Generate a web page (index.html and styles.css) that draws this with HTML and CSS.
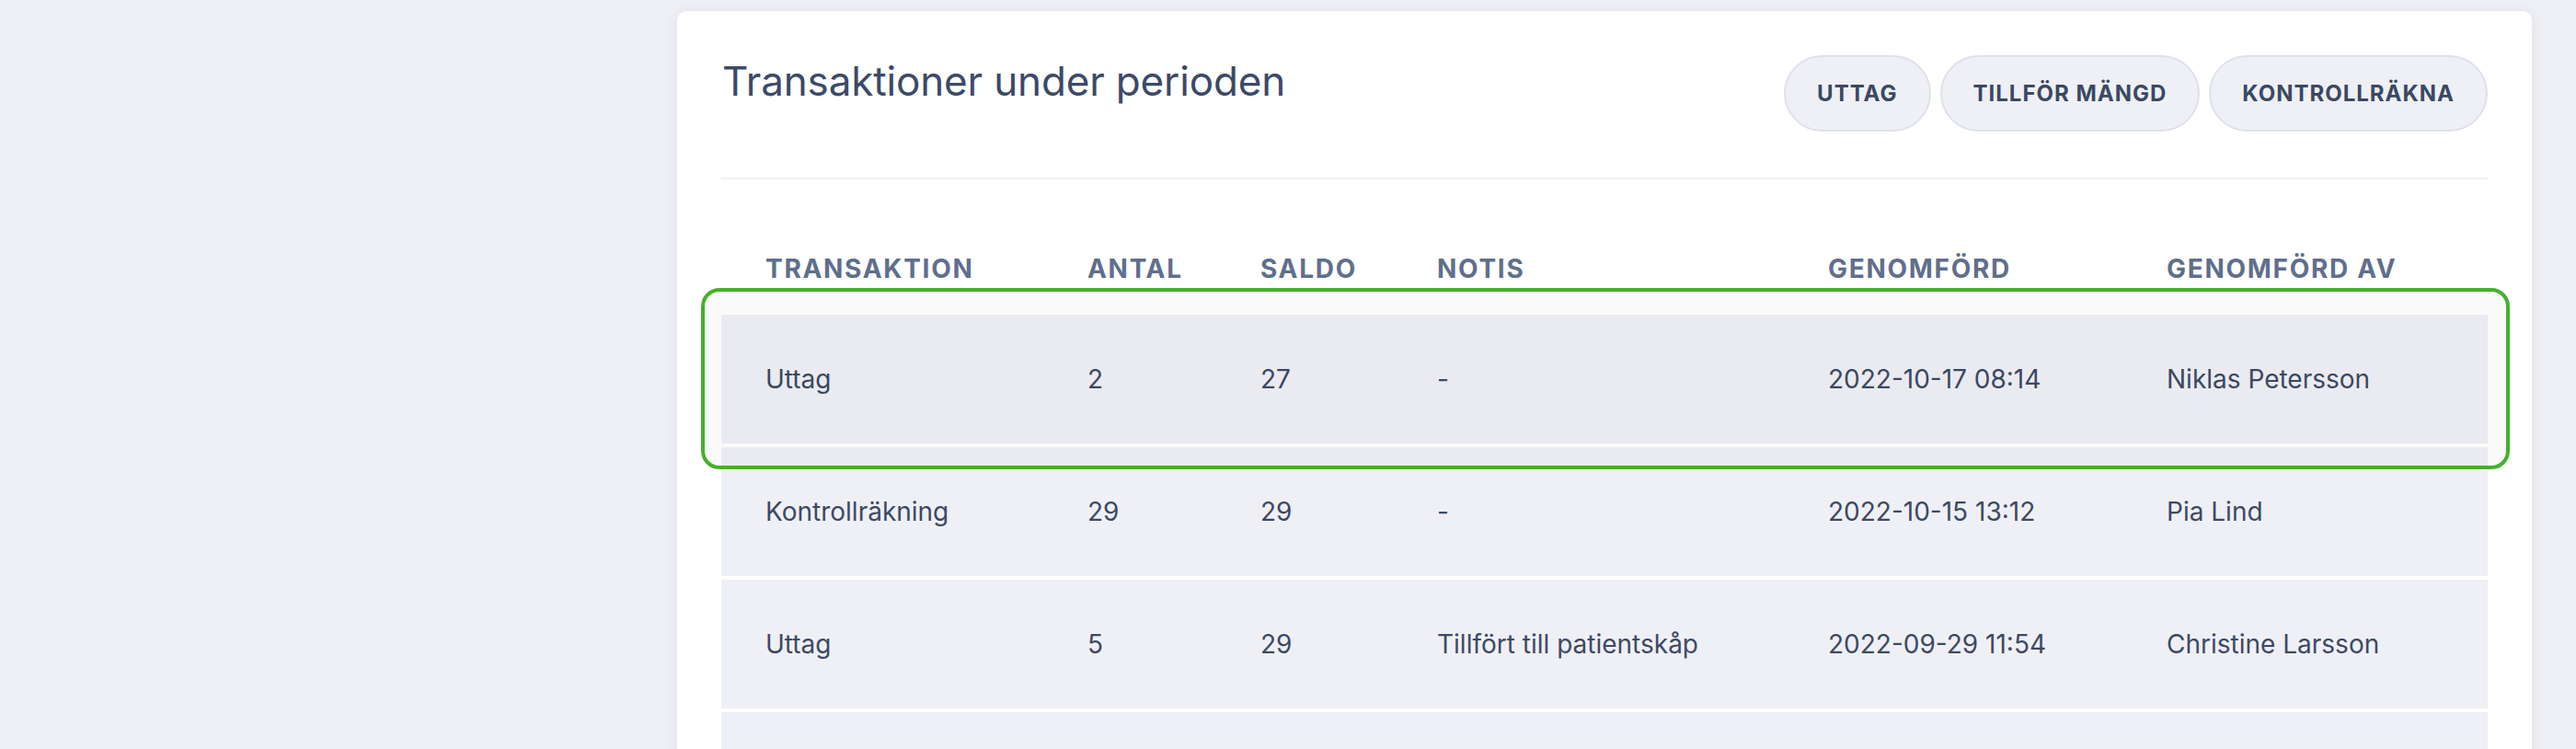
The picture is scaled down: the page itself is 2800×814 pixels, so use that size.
FILE: index.html
```html
<!DOCTYPE html>
<html lang="sv">
<head>
    <meta charset="UTF-8">
    <meta name="viewport" content="width=device-width, initial-scale=1.0">
    <title>Transaktioner</title>
    <link rel="stylesheet" href="styles.css">
</head>
<body>
    <div class="layout">
        <!-- Left column is left empty on this view -->
        <aside class="side"></aside>

        <main class="content">
            <section class="card">
                <header class="card-head">
                    <h2>Transaktioner under perioden</h2>
                    <div class="actions">
                        <button class="pill">Uttag</button>
                        <button class="pill">Tillför mängd</button>
                        <button class="pill">Kontrollräkna</button>
                    </div>
                </header>

                <div class="table-wrap">
                    <!-- highlight frame around the latest transaction -->
                    <div class="row-highlight"></div>

                    <table class="tx">
                        <thead>
                            <tr>
                                <th class="c-type">Transaktion</th>
                                <th class="c-qty">Antal</th>
                                <th class="c-bal">Saldo</th>
                                <th class="c-note">Notis</th>
                                <th class="c-date">Genomförd</th>
                                <th class="c-user">Genomförd av</th>
                            </tr>
                        </thead>
                        <tbody>
                            <tr>
                                <td>Uttag</td>
                                <td>2</td>
                                <td>27</td>
                                <td>-</td>
                                <td>2022-10-17 08:14</td>
                                <td>Niklas Petersson</td>
                            </tr>
                            <tr>
                                <td>Kontrollräkning</td>
                                <td>29</td>
                                <td>29</td>
                                <td>-</td>
                                <td>2022-10-15 13:12</td>
                                <td>Pia Lind</td>
                            </tr>
                            <tr>
                                <td>Uttag</td>
                                <td>5</td>
                                <td>29</td>
                                <td>Tillfört till patientskåp</td>
                                <td>2022-09-29 11:54</td>
                                <td>Christine Larsson</td>
                            </tr>
                            <tr class="row-more">
                                <td colspan="6"></td>
                            </tr>
                        </tbody>
                    </table>
                </div>
            </section>
        </main>
    </div>
</body>
</html>
```

FILE: styles.css
```css
* {
    margin: 0;
    padding: 0;
    box-sizing: border-box;
}

html, body {
    height: 100%;
    overflow: hidden;
}

body {
    background: #eff0f5;
    font-family: Inter, "Noto Sans", sans-serif;
    color: #3d4963;
}

.layout {
    display: grid;
    grid-template-columns: 736px 1fr;
}

.content {
    padding: 12px 48px 0 0;
}

.card {
    background: #fff;
    border-radius: 10px;
    padding: 48px 48px 0 48px;
    box-shadow: 0 0 14px rgba(60, 70, 110, 0.08);
}

.card-head {
    display: flex;
    justify-content: space-between;
    align-items: flex-start;
    padding-bottom: 50px;
    border-bottom: 2px solid #eef0f4;
}

.card-head h2 {
    font-size: 44px;
    font-weight: 400;
    line-height: 1.2;
    margin-top: 2px;
    padding-left: 1px;
    color: #3b4a68;
    letter-spacing: -0.15px;
}

.actions {
    display: flex;
    gap: 10px;
}

.pill {
    height: 83px;
    padding: 0 34px;
    border: 2px solid #dde1ec;
    border-radius: 999px;
    background: #eef0f5;
    color: #3b4862;
    font-family: inherit;
    font-size: 24px;
    font-weight: 700;
    letter-spacing: 1px;
    text-transform: uppercase;
    cursor: pointer;
}

.table-wrap {
    position: relative;
    margin-top: 49px;
}

.row-highlight {
    position: absolute;
    top: 69px;
    left: -22px;
    width: 1966px;
    height: 197px;
    border: 4px solid #44b12b;
    border-radius: 20px;
    background: rgba(0, 0, 0, 0.018);
    pointer-events: none;
}

.tx {
    width: 100%;
    table-layout: fixed;
    border-collapse: separate;
    border-spacing: 0 4px;
}

.tx th {
    padding: 24px 48px 26px;
    text-align: left;
    font-size: 28px;
    line-height: 40px;
    font-weight: 700;
    letter-spacing: 1.7px;
    text-transform: uppercase;
    color: #5f6f8c;
}

.tx td {
    height: 140px;
    padding: 0 48px;
    background: #eff0f5;
    font-size: 28px;
    line-height: 40px;
    vertical-align: middle;
    white-space: nowrap;
}

.c-type { width: 350px; }
.c-qty  { width: 188px; }
.c-bal  { width: 192px; }
.c-note { width: 425px; }
.c-date { width: 368px; }
.c-user { width: 397px; }
```
